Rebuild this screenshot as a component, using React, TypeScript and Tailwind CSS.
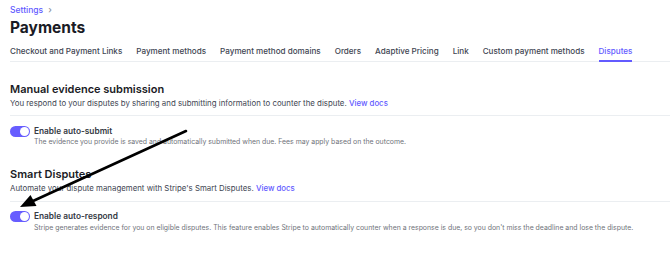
import React from "react"

const tabs = [
  "Checkout and Payment Links",
  "Payment methods",
  "Payment method domains",
  "Orders",
  "Adaptive Pricing",
  "Link",
  "Custom payment methods",
  "Disputes",
]

function Toggle() {
  return (
    <div className="w-[20px] h-[11px] rounded-full bg-[#675dff] flex items-center justify-end pr-[1px] shrink-0">
      <div className="w-[9px] h-[9px] rounded-full bg-white" />
    </div>
  )
}

function Section({ title, desc, label, sub }: { title: string; desc: string; label: string; sub: string }) {
  return (
    <div>
      <h2 className="text-[11px] leading-[14px] font-semibold text-[#1a1b25]">{title}</h2>
      <p className="mt-[2px] text-[7.85px] leading-[11px] text-[#414552] whitespace-nowrap">
        {desc} <span className="text-[#635bff] font-medium">View docs</span>
      </p>
      <div className="mt-[6.5px] border-t border-[#ebeef1]" />
      <div className="mt-[9.5px] flex gap-[4px]">
        <Toggle />
        <div>
          <div className="text-[8.3px] leading-[11px] font-semibold text-[#353a44]">{label}</div>
          <div className="mt-[0.5px] text-[6.9px] leading-[9px] text-[#6f737a] whitespace-nowrap">{sub}</div>
        </div>
      </div>
    </div>
  )
}

export default function App() {
  return (
    <div className="relative w-[670px] h-[253px] bg-white overflow-hidden font-['Inter',sans-serif]">
      <div className="pl-[10px] pt-[4px]">
        <div className="flex items-center gap-[5px] text-[8.5px] leading-[12px] font-medium text-[#635bff]">
          Settings <span className="text-[#87909f] text-[9px]">›</span>
        </div>
        <h1 className="mt-[2px] text-[15.5px] leading-[20px] font-bold text-[#1a1b25]">Payments</h1>
        <div className="mt-[7px] flex gap-[14px] border-b border-[#ebeef1] text-[8.1px] leading-[12px] font-medium text-[#414552] whitespace-nowrap">
          {tabs.map((t) => (
            <div
              key={t}
              className={
                t === "Disputes"
                  ? "pb-[3px] border-b-2 border-[#635bff] text-[#635bff] -mb-[1px]"
                  : "pb-[4px]"
              }
            >
              {t}
            </div>
          ))}
        </div>
        <div className="mt-[19.5px]">
          <Section
            title="Manual evidence submission"
            desc="You respond to your disputes by sharing and submitting information to counter the dispute."
            label="Enable auto-submit"
            sub="The evidence you provide is saved and automatically submitted when due. Fees may apply based on the outcome."
          />
        </div>
        <div className="mt-[21px]">
          <Section
            title="Smart Disputes"
            desc="Automate your dispute management with Stripe's Smart Disputes."
            label="Enable auto-respond"
            sub="Stripe generates evidence for you on eligible disputes. This feature enables Stripe to automatically counter when a response is due, so you don't miss the deadline and lose the dispute."
          />
        </div>
      </div>
      <svg className="absolute inset-0 pointer-events-none" width="670" height="253" viewBox="0 0 670 253">
        <line x1="186" y1="131" x2="33" y2="201" stroke="#000" strokeWidth="2.6" strokeLinecap="round" />
        <polygon points="20,207 30.5,195 36.5,206" fill="#000" />
      </svg>
    </div>
  )
}
